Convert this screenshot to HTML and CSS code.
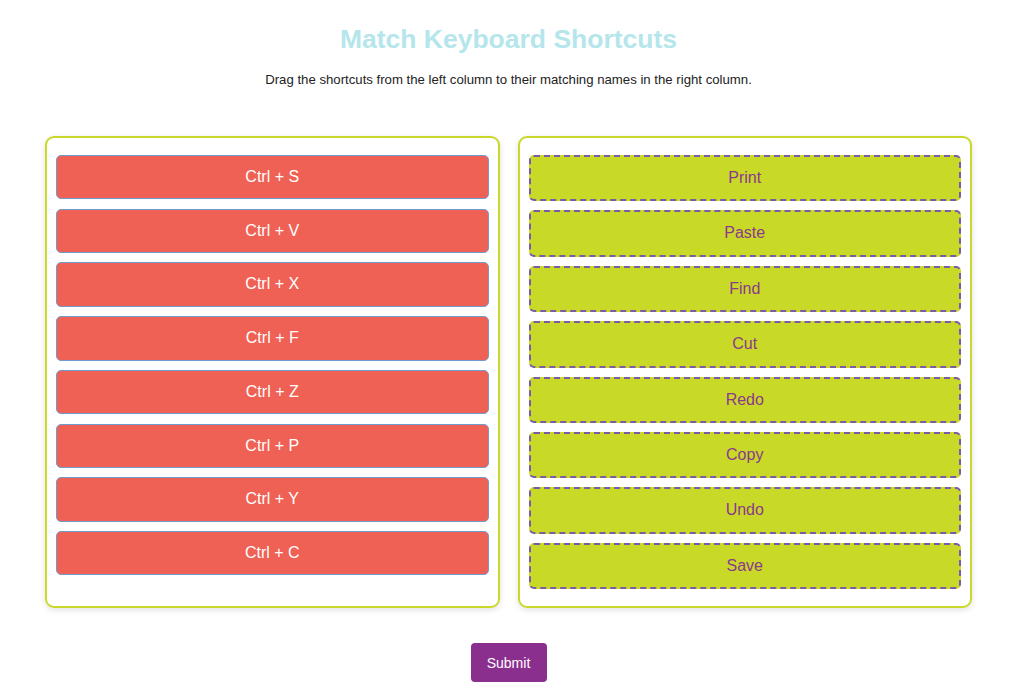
FILE: index.html
```html
<!DOCTYPE html>
<html lang="en">
<head>
  <meta charset="UTF-8"/>
  <meta name="viewport" content="width=device-width, initial-scale=1.0"/>
  <title>Match Keyboard Shortcuts</title>
  <link rel="stylesheet" href="styles.css">
</head>
<body>

  <div class="page">
    <h1>Match Keyboard Shortcuts</h1>
    <p class="intro">Drag the shortcuts from the left column to their matching names in the right column.</p>

    <div class="columns">
      <div class="column" id="shortcuts">
        <div class="shortcut" draggable="true">Ctrl + S</div>
        <div class="shortcut" draggable="true">Ctrl + V</div>
        <div class="shortcut" draggable="true">Ctrl + X</div>
        <div class="shortcut" draggable="true">Ctrl + F</div>
        <div class="shortcut" draggable="true">Ctrl + Z</div>
        <div class="shortcut" draggable="true">Ctrl + P</div>
        <div class="shortcut" draggable="true">Ctrl + Y</div>
        <div class="shortcut" draggable="true">Ctrl + C</div>
      </div>

      <div class="column names" id="names">
        <div class="target">Print</div>
        <div class="target">Paste</div>
        <div class="target">Find</div>
        <div class="target">Cut</div>
        <div class="target">Redo</div>
        <div class="target">Copy</div>
        <div class="target">Undo</div>
        <div class="target">Save</div>
      </div>
    </div>

    <div class="actions">
      <button type="button" class="btn">Submit</button>
    </div>
  </div>

</body>
</html>
```

FILE: styles.css
```css
body {
  font-family: 'Liberation Sans', Arial, sans-serif;
  margin: 0;
  background-color: #fff;
  color: #222;
}

.page {
  width: 927px;
  margin-left: 45px;
  padding-top: 23px;
  text-align: center;
}

h1 {
  margin: 0;
  font-size: 26.5px;
  line-height: 32px;
  color: #b5e6eb;
}

.intro {
  margin: 17px 0 0;
  font-size: 13.2px;
  line-height: 15px;
}

.columns {
  display: flex;
  gap: 18px;
  margin-top: 49px;
  text-align: left;
}

.column {
  flex: 1;
  display: flex;
  flex-direction: column;
  gap: 9.3px;
  padding: 17px 9px;
  border: 2px solid #c9d92a;
  border-radius: 9px;
  box-shadow: 0 2px 6px rgba(0,0,0,0.12);
}

.column.names {
  gap: 9px;
}

.shortcut,
.target {
  padding: 12px;
  font-size: 16px;
  line-height: 18.4px;
  text-align: center;
  border-radius: 5px;
}

.shortcut {
  background-color: #f06155;
  color: #fff;
  border: 1px solid #6f9bcf;
  cursor: grab;
}

.target {
  background-color: #c9d928;
  color: #8a3a8c;
  border: 2px dashed #7b5aa6;
}

.actions {
  margin-top: 35px;
}

.btn {
  background-color: #8b2f8f;
  color: #fff;
  border: none;
  border-radius: 4px;
  width: 76px;
  height: 39px;
  font-family: inherit;
  font-size: 14px;
  cursor: pointer;
}
```
